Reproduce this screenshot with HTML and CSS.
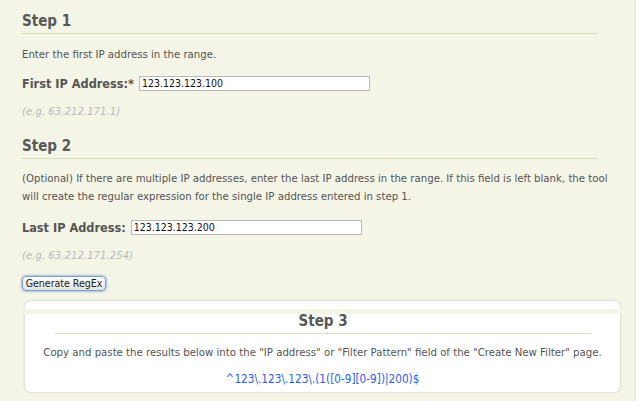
FILE: index.html
```html
<!DOCTYPE html>
<html>
<head>
<meta charset="utf-8">
<link rel="stylesheet" href="styles.css">
</head>
<body>
<div class="page">
  <section class="step step-1">
    <h2 class="step-title">Step 1</h2>
    <p class="text">Enter the first IP address in the range.</p>
    <div class="field">
      <label class="label">First IP Address:*</label>
      <input class="ip-input first" type="text" value="123.123.123.100">
    </div>
    <p class="hint">(e.g. 63.212.171.1)</p>
  </section>
  <section class="step step-2">
    <h2 class="step-title">Step 2</h2>
    <p class="text">(Optional) If there are multiple IP addresses, enter the last IP address in the range. If this field is left blank, the tool will create the regular expression for the single IP address entered in step 1.</p>
    <div class="field">
      <label class="label">Last IP Address:</label>
      <input class="ip-input last" type="text" value="123.123.123.200">
    </div>
    <p class="hint">(e.g. 63.212.171.254)</p>
  </section>
  <button class="generate" type="button">Generate RegEx</button>
  <section class="result">
    <div class="stripe"></div>
    <h2 class="result-title">Step 3</h2>
    <p class="result-text">Copy and paste the results below into the "IP address" or "Filter Pattern" field of the "Create New Filter" page.</p>
    <p class="regex">^123\.123\.123\.(1([0-9][0-9])|200)$</p>
  </section>
</div>
</body>
</html>
```

FILE: styles.css
```css
html, body {
  margin: 0;
  padding: 0;
  background: #f4f4e7;
}
body {
  font-family: "DejaVu Sans Condensed", "DejaVu Sans", sans-serif;
  color: #555;
  font-size: 11.3px;
  height: 401px;
  overflow: hidden;
  border-right: 1px solid #e4e4d8;
  box-sizing: border-box;
}
.page {
  padding: 10px 27px 0 22px;
  display: flex;
  flex-direction: column;
  align-items: flex-start;
}
.step {
  align-self: stretch;
}
.step-title {
  margin: 0 10px 0 0;
  font-size: 15px;
  line-height: 20px;
  font-weight: bold;
  color: #585858;
  padding: 1px 0 2px;
  border-bottom: 1px solid #dedec2;
}
.step-2 .step-title {
  margin-top: 14px;
}
.text {
  margin: 12px 0 0;
  line-height: 18px;
}
.step-2 .text {
  margin-top: 11px;
}
.field {
  display: flex;
  align-items: center;
  margin-top: 11px;
  height: 16px;
}
.step-2 .field {
  margin-top: 13px;
}
.label {
  font-weight: bold;
  font-size: 12.6px;
  color: #555;
  margin-right: 5px;
}
.ip-input {
  box-sizing: border-box;
  height: 15px;
  border: 1px solid #b8b8b8;
  background: #fff;
  padding: 0 2px;
  font-family: "DejaVu Sans Condensed", sans-serif;
  font-size: 10.5px;
  color: #111;
  outline: none;
}
.ip-input.first {
  width: 231px;
}
.ip-input.last {
  width: 231px;
}
.hint {
  margin: 12px 0 0;
  font-style: italic;
  color: #bbb;
  line-height: 18px;
}
.generate {
  margin-top: 11px;
  height: 15px;
  width: 84px;
  padding: 0;
  font-family: "DejaVu Sans Condensed", sans-serif;
  font-size: 10.5px;
  line-height: 13px;
  color: #222;
  background: linear-gradient(#ffffff, #e2e2e2);
  border: 1px solid #7f9fc9;
  border-radius: 4px;
  box-shadow: 0 0 2px 1px rgba(110, 160, 225, 0.6);
}
.result {
  position: relative;
  align-self: stretch;
  margin: 10px -12px 0 3px;
  height: 91px;
  background: #fff;
  border-radius: 6px;
  box-shadow: 0 0 3px rgba(0, 0, 0, 0.18);
  padding: 10px 14px 0 14px;
  box-sizing: border-box;
  text-align: center;
}
.stripe {
  position: absolute;
  top: 8px;
  left: -2px;
  right: -3px;
  height: 5px;
  background: #f4f4e7;
}
.result-title {
  margin: 0 15px 0 16px;
  font-size: 15px;
  line-height: 20px;
  color: #585858;
  padding-bottom: 2px;
  border-bottom: 1px solid #dedec2;
}
.result-text {
  margin: 10px 0 0;
  line-height: 18px;
  white-space: nowrap;
}
.regex {
  margin: 8px 0 0;
  line-height: 18px;
  font-size: 11.7px;
  color: #2e5ef0;
}
```
